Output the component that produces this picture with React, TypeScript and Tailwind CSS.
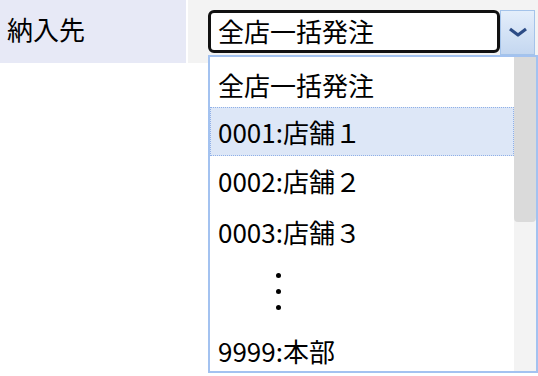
import React from 'react';

const font = { fontFamily: '"Noto Sans CJK JP", "Noto Sans", sans-serif' };

const options = ['全店一括発注', '0001:店舗１', '0002:店舗２', '0003:店舗３'];

export default function App() {
  return (
    <div className="w-[538px] h-[376px] bg-white overflow-hidden text-black" style={font}>
      <div className="flex h-[63px]">
        <div className="w-[186px] bg-[#e7e9f6] pl-[7px] pt-[11px] text-[26px] leading-[36px]">納入先</div>
        <div className="w-[2px] bg-white" />
        <div className="flex-1 bg-[#f3f3f3] pl-[20px] pt-[10px]">
          <div className="relative flex">
            <div className="w-[292px] h-[43px] border-[3px] border-[#111] rounded-[6px] bg-white pl-[7px] text-[26px] leading-[35px]">
              全店一括発注
            </div>
            <div className="w-[35px] h-[45px] border border-[#a4c3ea] bg-gradient-to-b from-[#e4eefb] to-[#c4d7f0] flex justify-center pt-[16px]">
              <svg width="20" height="10" viewBox="0 0 20 10">
                <path d="M2 2 L10 8 L18 2" fill="none" stroke="#2c4c86" strokeWidth="3.2" strokeLinejoin="round" />
              </svg>
            </div>
            <div className="absolute left-0 top-[45px] w-[330px] h-[318px] border-2 border-[#a3c2f0] bg-white flex">
              <div className="flex-1 flex flex-col text-[26px]">
                {options.map((o, i) => (
                  <div
                    key={o}
                    className={
                      i === 1
                        ? 'h-[49px] flex items-center pl-[7px] bg-[#dde7f7] border border-dotted border-[#8fb0e8]'
                        : i === 0
                          ? 'h-[51px] flex items-center pl-[8px] pt-[4px]'
                          : 'h-[51px] flex items-center pl-[8px]'
                    }
                  >
                    {o}
                  </div>
                ))}
                <div className="h-[64px] flex flex-col items-start pl-[66px] gap-[11px] pt-[17px]">
                  <span className="w-[5px] h-[5px] rounded-full bg-black" />
                  <span className="w-[5px] h-[5px] rounded-full bg-black" />
                  <span className="w-[5px] h-[5px] rounded-full bg-black" />
                </div>
                <div className="h-[52px] flex items-center pl-[8px] pt-[10px]">9999:本部</div>
              </div>
              <div className="w-[22px] bg-[#f3f3f3]">
                <div className="h-[165px] bg-[#dadada] rounded-b-[4px]" />
              </div>
            </div>
          </div>
        </div>
      </div>
    </div>
  );
}
